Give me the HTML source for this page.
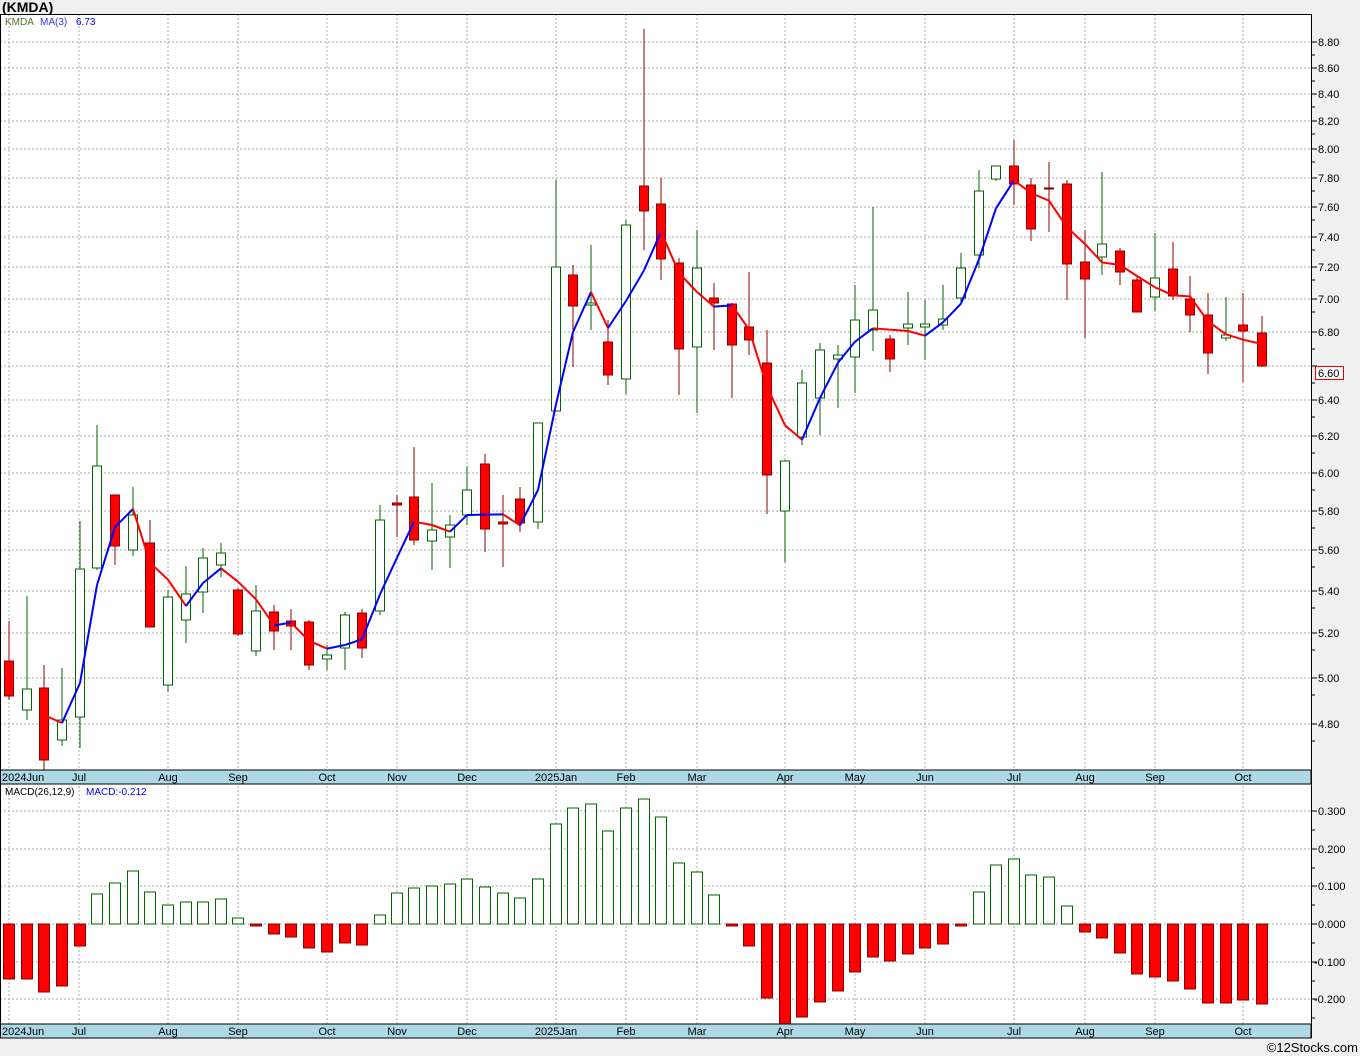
<!DOCTYPE html>
<html><head><meta charset="utf-8"><style>
body{margin:0;background:#f0f0f0;width:1360px;height:1056px;overflow:hidden;font-family:"Liberation Sans",sans-serif}
svg{display:block}
</style></head><body>
<svg id="s" width="1360" height="1056" xmlns="http://www.w3.org/2000/svg" font-family="Liberation Sans, sans-serif" font-size="11">
<rect x="0" y="0" width="1360" height="1056" fill="#f0f0f0"/>
<rect x="0" y="14" width="1311" height="756" fill="#fff"/>
<rect x="0" y="784" width="1311" height="240" fill="#fff"/>
<text x="2" y="12" font-size="14" font-weight="bold">(KMDA)</text>
<g id="g"></g>
<text x="1358" y="1052" font-size="13" text-anchor="end">©12Stocks.com</text>
</svg>
<script>
const g=document.getElementById('g');let h='';
const xs=[9,27,44,62,80,97,115,133,150,168,186,203,221,238,256,274,291,309,327,345,362,380,397,414,432,450,467,485,503,520,538,556,573,591,608,626,644,661,679,697,714,732,749,767,785,802,820,838,855,873,890,908,925,943,961,979,996,1014,1031,1049,1067,1085,1102,1120,1137,1155,1173,1190,1208,1226,1243,1262];
const c=[[661,696,621,700,0],[689,710,596,720,1],[688,760,665,770,0],[720,740,668,746,1],[569,717,521,748,1],[466,568,425,570,1],[495,546,495,565,0],[515,550,487,556,1],[543,627,520,627,0],[597,685,590,692,1],[594,620,566,643,1],[558,592,548,613,1],[553,565,543,577,1],[590,634,588,636,0],[611,651,585,656,1],[612,631,605,650,0],[621,626,609,650,0],[622,665,620,670,0],[655,659,645,670,1],[615,648,612,670,1],[613,648,609,658,0],[520,611,505,615,1],[503,505,495,537,0],[497,540,447,545,0],[530,541,483,570,1],[525,537,515,568,1],[490,515,466,525,1],[464,529,454,552,0],[522,524,495,567,0],[499,523,487,532,0],[423,522,423,529,1],[267,411,180,411,1],[275,306,265,367,0],[303,305,245,330,1],[342,375,320,385,0],[225,379,220,394,1],[186,211,29,250,0],[204,259,178,280,0],[263,349,258,395,0],[268,347,230,413,1],[298,303,283,350,0],[304,345,303,398,0],[327,340,272,355,0],[363,475,330,514,0],[461,511,460,562,1],[383,437,370,445,1],[350,398,343,435,1],[355,359,345,408,1],[320,357,285,393,1],[310,330,207,351,1],[339,359,335,372,0],[324,328,292,345,1],[324,327,300,360,1],[319,325,285,330,1],[268,298,253,302,1],[191,255,170,268,1],[166,179,166,181,1],[166,184,140,205,0],[185,229,178,241,0],[188,189,162,232,0],[184,264,180,300,0],[262,279,230,338,0],[244,257,172,275,1],[251,272,248,285,0],[280,312,276,312,0],[278,297,233,311,1],[269,296,242,300,0],[299,315,276,332,0],[315,353,293,374,0],[335,338,297,341,1],[325,331,293,382,0],[333,366,316,367,0]];
const m=[-979,-979,-992,-986,-946,894,883,871,892,905,902,902,899,918,-926,-934,-937,-948,-952,-943,-945,915,893,888,886,884,879,887,893,898,879,824,808,804,831,808,799,817,863,872,895,-926,-946,-998,-1026,-1017,-1002,-991,-972,-957,-961,-954,-948,-944,-926,892,865,859,875,877,906,-932,-938,-953,-974,-977,-981,-989,-1003,-1003,-1000,-1004];
const py=[[8.8,42],[8.6,68],[8.4,94],[8.2,121],[8,149],[7.8,178],[7.6,207],[7.4,237],[7.2,267],[7,299],[6.8,332],[6.6,366],[6.4,400],[6.2,436],[6,473],[5.8,511],[5.6,550],[5.4,591],[5.2,633],[5,678],[4.8,724]];
const vx=[9,79,168,238,327,397,467,556,626,697,785,855,925,1014,1085,1155,1243];
const mn=['2024Jun','Jul','Aug','Sep','Oct','Nov','Dec','2025Jan','Feb','Mar','Apr','May','Jun','Jul','Aug','Sep','Oct'];
for(const [p,y] of py){h+=`<line x1="0" x2="1311" y1="${y}" y2="${y}" stroke="#aaa" stroke-dasharray="2,2"/><line x1="1311" x2="1317" y1="${y}" y2="${y}" stroke="#000"/>`;
 if(p!==6.6)h+=`<text x="1318" y="${y+4}">${p.toFixed(2)}</text>`;
 h+=`<line x1="1311" x2="1315" y1="${y+(y>300?17:13)}" y2="${y+(y>300?17:13)}" stroke="#000"/>`;}
const my=[[0.3,811],[0.2,849],[0.1,886],[0,924],[-0.1,962],[-0.2,999]];
for(const [p,y] of my){h+=`<line x1="0" x2="1311" y1="${y}" y2="${y}" stroke="#aaa" stroke-dasharray="2,2"/><line x1="1311" x2="1317" y1="${y}" y2="${y}" stroke="#000"/><text x="${p<0?1314:1318}" y="${y+4}">${p.toFixed(3)}</text><line x1="1311" x2="1315" y1="${y+19}" y2="${y+19}" stroke="#000"/>`;}
for(const x of vx){h+=`<line x1="${x}" x2="${x}" y1="14" y2="1024" stroke="#aaa" stroke-dasharray="2,2"/>`;}
c.forEach((d,i)=>{const x=xs[i];const col=d[4]?'#006400':'#8b0000';
h+=`<line x1="${x}" x2="${x}" y1="${d[2]}" y2="${d[3]}" stroke="${col}"/>`;
h+=`<rect x="${x-4.5}" y="${d[0]}" width="9" height="${Math.max(1,d[1]-d[0])}" fill="${d[4]?'#fff':'#f00'}" stroke="${col}"/>`;});
const cl=c.map(d=>d[4]?d[0]:d[1]);
let prev=null;
for(let i=2;i<c.length;i++){const v=(cl[i]+cl[i-1]+cl[i-2])/3;if(prev){h+=`<line x1="${prev[0]}" y1="${prev[1]}" x2="${xs[i]}" y2="${v}" stroke="${v<prev[1]?'#0000ff':'#ff0000'}" stroke-width="2"/>`;}prev=[xs[i],v];}
m.forEach((v,i)=>{const x=xs[i];const a=Math.abs(v);if(v>0)h+=`<rect x="${x-5.5}" y="${a}" width="11" height="${924-a}" fill="#fff" stroke="#006400"/>`;else h+=`<rect x="${x-5.5}" y="924" width="11" height="${a-924}" fill="#f00" stroke="#8b0000"/>`;});
h+=`<rect x="0" y="770" width="1311" height="14" fill="#add8e6" stroke="#000"/><rect x="0" y="1024" width="1311" height="14" fill="#add8e6" stroke="#000"/>`;
vx.forEach((x,i)=>{const a=i==0?'start':'middle',xx=i==0?2:x;h+=`<text x="${xx}" y="781" text-anchor="${a}">${mn[i]}</text><text x="${xx}" y="1035" text-anchor="${a}">${mn[i]}</text>`;});
h+=`<line x1="0" x2="1311" y1="14.5" y2="14.5" stroke="#000"/><line x1="0.5" x2="0.5" y1="14" y2="1038" stroke="#000"/><line x1="1311.5" x2="1311.5" y1="14" y2="1038" stroke="#000"/>`;
h+=`<rect x="1315.5" y="366.5" width="28" height="13" fill="#fff" stroke="#f00"/><text x="1318" y="377">6.60</text>`;
h+=`<text x="5" y="25" font-size="10" fill="#556b2f">KMDA</text><text x="40" y="25" font-size="10" fill="#33f">MA(3)</text><text x="76" y="25" font-size="10" fill="#00f">6.73</text>`;
h+=`<text x="5" y="795" font-size="10">MACD(26,12,9)</text><text x="86" y="795" font-size="10" fill="#00f">MACD:-0.212</text>`;
g.innerHTML=h;
</script>
</body></html>
